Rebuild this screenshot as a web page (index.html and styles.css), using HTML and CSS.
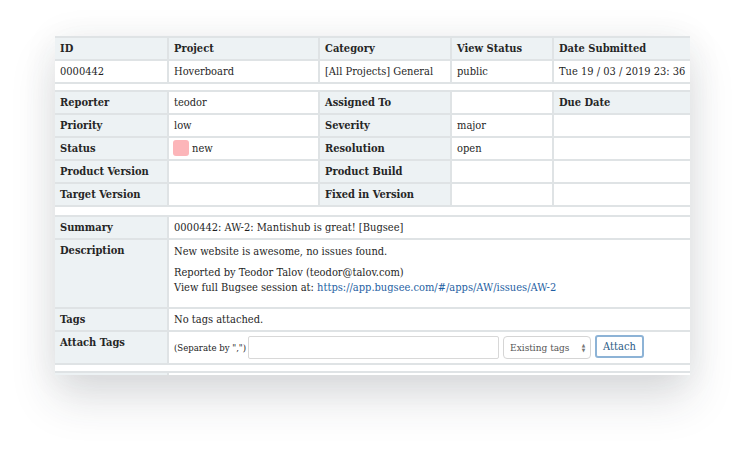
FILE: index.html
```html
<!DOCTYPE html>
<html>
<head>
<meta charset="utf-8">
<link rel="stylesheet" href="styles.css">
</head>
<body>
<div class="page">
  <div class="card">
    <table class="issue">
      <colgroup>
        <col class="c1"><col class="c2"><col class="c3"><col class="c4"><col class="c5">
      </colgroup>
      <tr class="head">
        <th>ID</th><th>Project</th><th>Category</th><th>View Status</th><th>Date Submitted</th>
      </tr>
      <tr>
        <td>0000442</td><td>Hoverboard</td><td>[All Projects] General</td><td>public</td><td>Tue 19 / 03 / 2019 23: 36</td>
      </tr>
      <tr class="spacer"><td colspan="5"></td></tr>
      <tr>
        <th>Reporter</th><td>teodor</td><th>Assigned To</th><td></td><th>Due Date</th>
      </tr>
      <tr>
        <th>Priority</th><td>low</td><th>Severity</th><td>major</td><td></td>
      </tr>
      <tr>
        <th>Status</th><td><span class="swatch"></span>new</td><th>Resolution</th><td>open</td><td></td>
      </tr>
      <tr>
        <th>Product Version</th><td></td><th>Product Build</th><td></td><td></td>
      </tr>
      <tr>
        <th>Target Version</th><td></td><th>Fixed in Version</th><td></td><td></td>
      </tr>
      <tr class="spacer tall"><td colspan="5"></td></tr>
      <tr>
        <th>Summary</th><td colspan="4">0000442: AW-2: Mantishub is great! [Bugsee]</td>
      </tr>
      <tr class="desc">
        <th>Description</th>
        <td colspan="4">
          <p class="first">New website is awesome, no issues found.</p>
          <p>Reported by Teodor Talov (teodor@talov.com)<br>View full Bugsee session at: <a href="#">https://app.bugsee.com/#/apps/AW/issues/AW-2</a></p>
        </td>
      </tr>
      <tr>
        <th>Tags</th><td colspan="4">No tags attached.</td>
      </tr>
      <tr class="attach">
        <th>Attach Tags</th>
        <td colspan="4">
          <div class="tagform">
            <span class="hint">(Separate by ",")</span>
            <span class="input"></span>
            <span class="select">Existing tags<span class="arrows">&#9650;<br>&#9660;</span></span>
            <span class="btn">Attach</span>
          </div>
        </td>
      </tr>
      <tr class="spacer"><td colspan="5"></td></tr>
      <tr>
        <th>&nbsp;</th><td colspan="4">&nbsp;</td>
      </tr>
    </table>
  </div>
</div>
</body>
</html>
```
FILE: styles.css
```css
html, body {
  margin: 0;
  padding: 0;
  background: #ffffff;
}
.page {
  width: 745px;
  height: 450px;
  padding: 36px 0 0 55px;
  box-sizing: border-box;
  overflow: hidden;
}
.card {
  width: 635px;
  height: 339px;
  overflow: hidden;
  background: #ffffff;
  box-shadow: 0 24px 42px rgba(40, 50, 60, 0.15), 0 2px 34px rgba(40, 50, 60, 0.07);
}
.issue {
  width: 660px;
  table-layout: fixed;
  border-collapse: collapse;
  font-family: "DejaVu Serif", serif;
  font-stretch: semi-condensed;
  font-size: 11px;
  color: #1f1f1f;
}
.c1 { width: 113px; }
.c2 { width: 151px; }
.c3 { width: 132px; }
.c4 { width: 102px; }
.c5 { width: 162px; }
.issue th, .issue td {
  border: 1px solid #dfe3e5;
  border-width: 2px 2px 0 0;
  padding: 0 5px;
  height: 21px;
  text-align: left;
  vertical-align: middle;
  white-space: nowrap;
  overflow: hidden;
}
.issue th {
  font-weight: bold;
  background: #edf2f4;
  color: #262626;
}
.issue tr.spacer td {
  height: 6px;
  padding: 0;
  background: #ffffff;
}
.issue tr.spacer.tall td {
  height: 8px;
}
.swatch {
  display: inline-block;
  width: 16px;
  height: 16px;
  border-radius: 3px;
  background: #fcb5b9;
  vertical-align: middle;
  margin: -2px 3px 0 -1px;
}
.desc th, .desc td {
  vertical-align: top;
  height: 63px;
  padding-top: 4px;
}
.desc p {
  margin: 0;
  line-height: 15px;
}
.desc p.first {
  margin-bottom: 6px;
}
a {
  color: #1f5fa3;
  text-decoration: none;
}
.attach th {
  vertical-align: top;
  padding-top: 4px;
  height: 27px;
}
.tagform {
  display: flex;
  align-items: center;
  gap: 4px;
}
.hint {
  font-size: 9.5px;
  color: #222222;
  margin-right: -2px;
}
.input {
  width: 251px;
  height: 23px;
  border: 1px solid #d8d8d8;
  border-radius: 2px;
  box-sizing: border-box;
  display: block;
}
.select {
  width: 88px;
  height: 23px;
  box-sizing: border-box;
  border: 1px solid #d5d5d5;
  border-radius: 4px;
  display: flex;
  align-items: center;
  justify-content: space-between;
  padding: 0 5px 0 6px;
  font-size: 10px;
  color: #555;
}
.arrows {
  font-size: 5px;
  line-height: 5px;
  color: #777;
  text-align: center;
}
.btn {
  height: 23px;
  box-sizing: border-box;
  border: 2px solid #8db3d6;
  border-radius: 3px;
  padding: 0 6px;
  display: flex;
  align-items: center;
  color: #2c5b86;
  font-size: 11px;
  margin-top: -2px;
}
```
